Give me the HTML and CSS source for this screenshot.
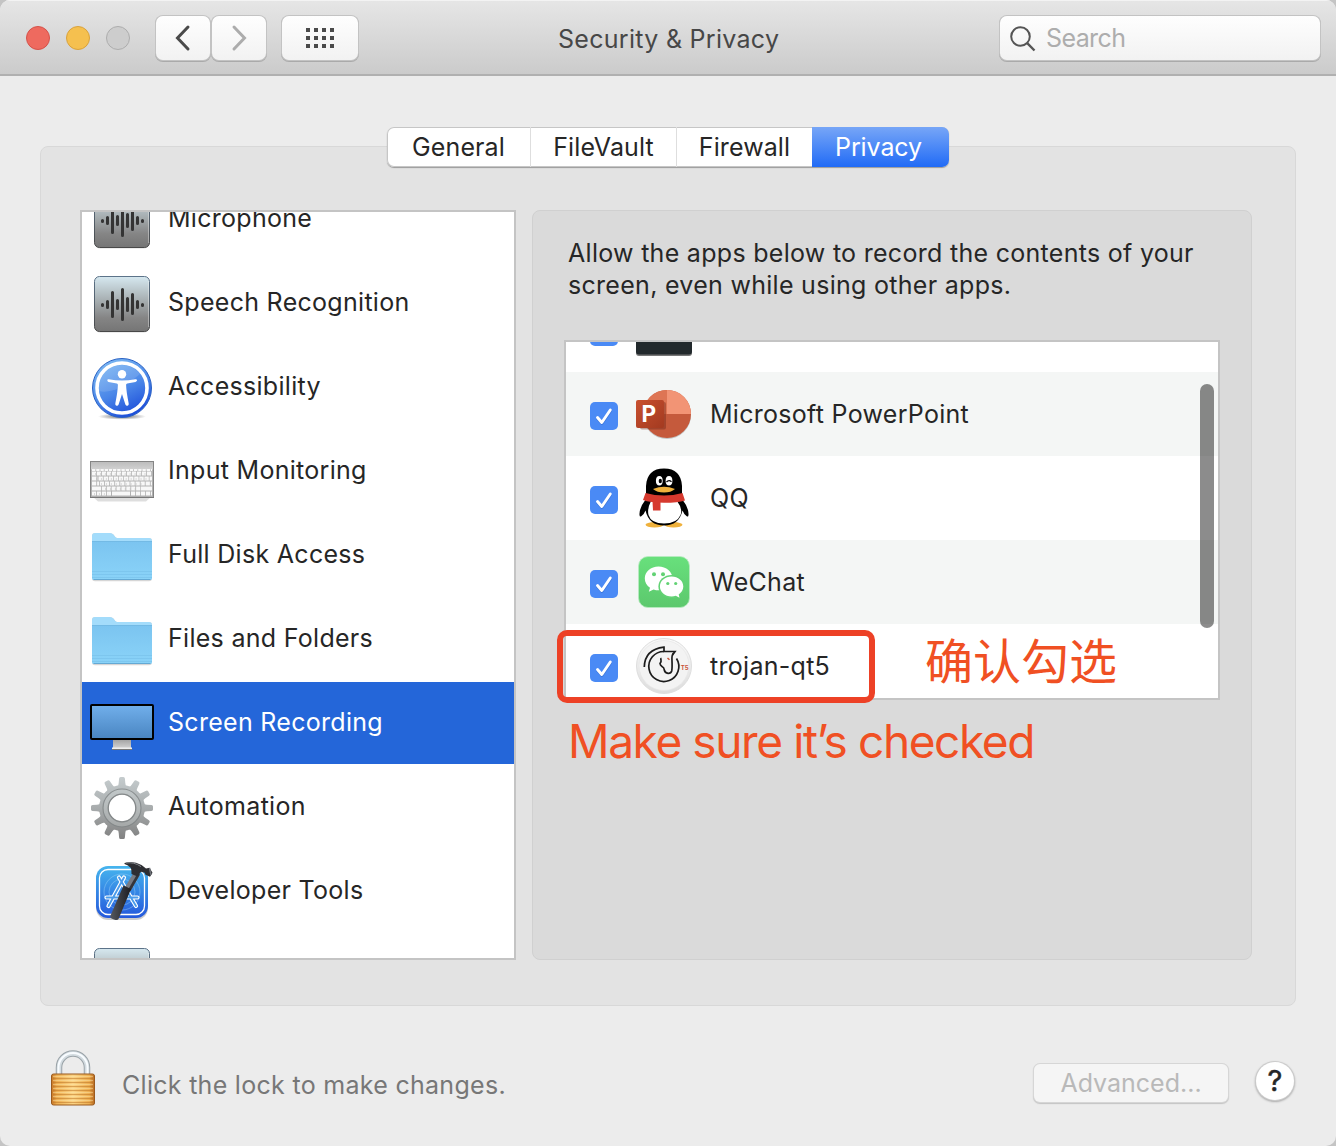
FILE: index.html
```html
<!DOCTYPE html>
<html lang="en">
<head>
<meta charset="utf-8">
<title>Security &amp; Privacy</title>
<link rel="stylesheet" href="styles.css">
</head>
<body>
<svg class="defs" width="0" height="0" aria-hidden="true">
  <defs>
    <linearGradient id="wave-bg" x1="0" y1="0" x2="0" y2="1"><stop offset="0" stop-color="#d6e8f0"/><stop offset=".3" stop-color="#b5c0c4"/><stop offset=".75" stop-color="#858585"/><stop offset="1" stop-color="#757575"/></linearGradient>
    <linearGradient id="wave-edge" x1="0" y1="0" x2="0" y2="1"><stop offset="0" stop-color="#5c7389"/><stop offset="1" stop-color="#484848"/></linearGradient>
    <linearGradient id="folder-bg" x1="0" y1="0" x2="0" y2="1"><stop offset="0" stop-color="#7bc4f0"/><stop offset="1" stop-color="#8ad3f8"/></linearGradient>
    <symbol id="wave" viewBox="0 0 64 64">
      <rect x="4.5" y="5" width="55" height="55.500" rx="5" fill="#000" opacity=".15"/>
      <rect x="4.500" y="4.500" width="55" height="55" rx="5" fill="url(#wave-bg)" stroke="url(#wave-edge)"/>
      <path d="M58.500 9v46" stroke="#fff" opacity=".35"/>
      <g stroke="#343434" stroke-width="3" stroke-linecap="round"><path d="M12.500 32.600v.8M17.500 29.500v6M22.500 20.500v24M27.500 28.500v8M32.500 17.500v30M37.500 26.500v12M42.500 22.500v19M47.500 29.500v6M52.500 32.600v.8"/></g>
    </symbol>
    <symbol id="folder" viewBox="0 0 64 64">
      <path d="M2 48V12q0-3 3-3h15q2 0 3.400 1.600l1.900 2.400q.8.900 2.200.900H59q3 0 3 3V54q0 3.300-3 3.300H5q-3 0-3-3.300z" fill="#000" opacity=".16"/>
      <path d="M2 40V12q0-3 3-3h15q2 0 3.400 1.600l1.900 2.400q.8 1 2.200 1H59q3 0 3 3v37q0 2-2.500 2H4.500Q2 56 2 54z" fill="#a3dcfb"/>
      <path d="M2 17h60v36.500q0 2.500-2.500 2.500h-55Q2 56 2 53.500z" fill="url(#folder-bg)"/>
      <path d="M2 17.500h60" stroke="#6fb5de" opacity=".6"/>
      <path d="M2 47.500h60M2 50.500h60M2 53.500h60" stroke="#74bde8" opacity=".5"/>
      <path d="M3.500 55.500h57" stroke="#64a9d4"/>
    </symbol>
    <symbol id="check" viewBox="0 0 28 28">
      <path d="M7.500 16.500l4.500 5L20.500 9" fill="none" stroke="#1a4db0" stroke-opacity=".35" stroke-width="2.800" stroke-linecap="round" stroke-linejoin="round"/>
      <path d="M7.500 15.500l4.300 5L20.300 8" fill="none" stroke="#fff" stroke-width="2.900" stroke-linecap="round" stroke-linejoin="round"/>
    </symbol>
  </defs>
</svg>

<div class="window">
  <header class="titlebar">
    <div class="lights"><span class="light close"></span><span class="light minimize"></span><span class="light zoom"></span></div>
    <div class="nav">
      <button class="tool"><svg width="20" height="28" viewBox="0 0 20 28"><path d="M15 3L4.500 14 15 25" fill="none" stroke="#4a4a4a" stroke-width="3" stroke-linecap="round"/></svg></button>
      <button class="tool"><svg width="20" height="28" viewBox="0 0 20 28"><path d="M5 3L15.500 14 5 25" fill="none" stroke="#acacac" stroke-width="3" stroke-linecap="round"/></svg></button>
    </div>
    <button class="tool grid"><svg width="28" height="20" viewBox="0 0 28 20" fill="#4a4a4a"><path d="M0 0h4v4H0zM8 0h4v4H8zM16 0h4v4h-4zM24 0h4v4h-4zM0 8h4v4H0zM8 8h4v4H8zM16 8h4v4h-4zM24 8h4v4h-4zM0 16h4v4H0zM8 16h4v4H8zM16 16h4v4h-4zM24 16h4v4h-4z"/></svg></button>
    <h1 class="title">Security &amp; Privacy</h1>
    <div class="search">
      <svg width="26" height="26" viewBox="0 0 26 26" fill="none" stroke="#555" stroke-width="2"><circle cx="10.500" cy="10.500" r="9.300"/><path d="M17.200 17.200l7.300 7.300" stroke-width="2.400"/></svg>
      <span>Search</span>
    </div>
  </header>

  <main class="panel">
    <nav class="tabs">
      <span class="tab t-general">General</span><span class="tab t-vault">FileVault</span><span class="tab t-fire">Firewall</span><span class="tab t-privacy">Privacy</span>
    </nav>
    <div class="columns">
      <ul class="services">
        <li><svg class="icon"><use href="#wave"/></svg><span>Microphone</span></li>
        <li><svg class="icon"><use href="#wave"/></svg><span>Speech Recognition</span></li>
        <li>
          <svg class="icon" viewBox="0 0 64 64">
            <defs><linearGradient id="acc" x1=".2" y1="0" x2=".7" y2="1"><stop offset="0" stop-color="#7cbaf3"/><stop offset=".55" stop-color="#4a86e8"/><stop offset="1" stop-color="#1848d8"/></linearGradient>
            <radialGradient id="acc-shade"><stop offset="0" stop-color="#000" stop-opacity=".6"/><stop offset="1" stop-color="#000" stop-opacity="0"/></radialGradient></defs>
            <ellipse cx="32" cy="60.500" rx="24" ry="3.200" fill="url(#acc-shade)"/>
            <circle cx="32" cy="32" r="29.500" fill="url(#acc)" stroke="#2b62c4"/>
            <circle cx="32" cy="32" r="25" fill="none" stroke="#fff" stroke-width="3.600"/>
            <path d="M9 35Q25 39 50 18A23 23 0 0 0 9 35z" fill="#fff" opacity=".13"/>
            <circle cx="32" cy="18.300" r="4.200" fill="#fff"/>
            <path d="M17.500 23.600q-.8 1.800 1 2.300l8.300 1.600q1.200.300 1.100 1.600-.1 6-2.600 18.400-.3 2 1.200 2.300 1.500.300 2.100-1.400L32 38l3.400 10.400q.6 1.700 2.100 1.400 1.500-.3 1.200-2.300-2.500-12.400-2.600-18.400-.1-1.300 1.100-1.600l8.300-1.600q1.800-.5 1.600-1.800-.3-1.100-1.800-.9Q32 25.800 18.700 23.200q-.8-.1-1.200.4z" fill="#fff"/>
          </svg><span>Accessibility</span></li>
        <li>
          <svg class="icon" viewBox="0 0 64 64">
            <defs><linearGradient id="kb" x1="0" y1="0" x2="0" y2="1"><stop offset="0" stop-color="#bcbcbc"/><stop offset=".2" stop-color="#cfcfcf"/><stop offset=".25" stop-color="#b5b5b5"/><stop offset="1" stop-color="#b0b0b0"/></linearGradient></defs>
            <path d="M3 57h58l-5 4.500H8z" fill="#000" opacity=".13"/>
            <rect x=".5" y="21.500" width="63" height="36" fill="url(#kb)" stroke="#858585"/>
            <path d="M0 57.500h64" stroke="#777"/>
            <g stroke="#f8f8f8" fill="none">
              <path d="M2 30h60" stroke-width="2" stroke-dasharray="3.400 .8"/>
              <path d="M2 33.600h60" stroke-width="4" stroke-dasharray="4.200 .8"/>
              <path d="M2 38.600h5.500m1 0h53.500" stroke-width="4" stroke-dasharray="4.400 .7"/>
              <path d="M2 43.500h7m.8 0h45m.8 0h6.400" stroke-width="4" stroke-dasharray="4.300 .8"/>
              <path d="M2 48.500h9M50.800 48.500h11.200" stroke-width="4"/><path d="M11.800 48.500h38.500" stroke-width="4" stroke-dasharray="4.100 .8"/>
              <path d="M2 53.500h19" stroke-width="4" stroke-dasharray="4.200 .8"/><path d="M22 53.500h18" stroke-width="4"/><path d="M41 53.500h21" stroke-width="4" stroke-dasharray="4.200 .8"/>
            </g>
            <path d="M5 34h54M6 39h52M11 44h44M15 49h34M4 54h15" stroke="#bbb" stroke-width="1" stroke-dasharray="1 3.950" fill="none"/>
          </svg><span>Input Monitoring</span></li>
        <li><svg class="icon"><use href="#folder"/></svg><span>Full Disk Access</span></li>
        <li><svg class="icon"><use href="#folder"/></svg><span>Files and Folders</span></li>
        <li class="selected">
          <svg class="icon" viewBox="0 0 64 64">
            <defs><linearGradient id="scr" x1="0" y1="0" x2="0" y2="1"><stop offset="0" stop-color="#70aeea"/><stop offset="1" stop-color="#4a86c2"/></linearGradient><linearGradient id="stand" x1="0" y1="0" x2="0" y2="1"><stop offset="0" stop-color="#a5a5a5"/><stop offset="1" stop-color="#d0d0d0"/></linearGradient></defs>
            <path d="M23 48h18v8H23z" fill="url(#stand)"/><path d="M22 55.500h20v2H22z" fill="#eee"/><path d="M22 57.500h20" stroke="#777"/>
            <rect x="0" y="12" width="64" height="36" rx="2" fill="#000"/><rect x="2" y="14" width="60" height="32" fill="url(#scr)"/>
          </svg><span>Screen Recording</span></li>
        <li>
          <svg class="icon" viewBox="0 0 64 64">
            <defs><linearGradient id="gear" gradientUnits="userSpaceOnUse" x1="0" y1="0" x2="0" y2="64"><stop offset="0" stop-color="#c6cdcf"/><stop offset=".5" stop-color="#a8acad"/><stop offset="1" stop-color="#808080"/></linearGradient>
            <mask id="gear-mask"><circle cx="32" cy="32" r="23" fill="#fff"/>
              <g fill="#fff">
                <path id="teeth" d="M27 11q1.600-1 1.700-4l.4-4.500q.1-1.500 1.500-1.500h2.800q1.400 0 1.500 1.500l.4 4.500q.1 3 1.700 4zM27 53q1.600 1 1.700 4l.4 4.500q.1 1.500 1.500 1.500h2.800q1.400 0 1.500-1.500l.4-4.500q.1-3 1.700-4z"/>
                <use href="#teeth" transform="rotate(30 32 32)"/><use href="#teeth" transform="rotate(60 32 32)"/><use href="#teeth" transform="rotate(90 32 32)"/><use href="#teeth" transform="rotate(120 32 32)"/><use href="#teeth" transform="rotate(150 32 32)"/>
              </g><circle cx="32" cy="32" r="13.500" fill="#000"/></mask></defs>
            <g mask="url(#gear-mask)"><rect width="64" height="64" fill="url(#gear)"/></g>
            <circle cx="32" cy="32" r="16.500" fill="none" stroke="#d5dadb" stroke-opacity=".3" stroke-width="4.500"/>
            <circle cx="32" cy="32" r="19" fill="none" stroke="#7e8384" stroke-opacity=".8" stroke-width="1.100"/>
            <circle cx="32" cy="32" r="13.800" fill="none" stroke="#85898a" stroke-width="1.300"/>
          </svg><span>Automation</span></li>
        <li>
          <svg class="icon" viewBox="0 0 64 64">
            <defs><linearGradient id="xc" x1="0" y1="0" x2="0" y2="1"><stop offset="0" stop-color="#46b5ee"/><stop offset="1" stop-color="#2458dc"/></linearGradient><linearGradient id="handle" x1="0" y1="0" x2="1" y2="0"><stop offset="0" stop-color="#55585f"/><stop offset="1" stop-color="#1c1c20"/></linearGradient></defs>
            <rect x="6" y="8" width="52" height="52" rx="12" fill="#000" opacity=".2"/>
            <rect x="6" y="6" width="52" height="52" rx="12" fill="url(#xc)"/>
            <rect x="9.500" y="9.500" width="45" height="45" rx="8.500" fill="none" stroke="#fff" stroke-width="1.300"/>
            <circle cx="32" cy="32" r="18" fill="none" stroke="#a8dafb" stroke-opacity=".4"/><circle cx="32" cy="32" r="13" fill="none" stroke="#a8dafb" stroke-opacity=".4"/>
            <g fill="none" stroke="#fff" stroke-width="4.200" stroke-linecap="round"><path d="M16.500 37.500h31M34 17.500L18.500 46M29 17.500L46 46"/></g>
            <g fill="none" stroke="#4a9bea" stroke-width="1.900" stroke-linecap="round"><path d="M16.500 37.500h31M34 17.500L18.500 46M29 17.500L46 46"/></g>
            <path d="M44 12l6 2.500L40.500 31l-6-3z" fill="#777b83"/><path d="M47.500 13.500l2.500 1L40.500 31l-2.500-1.200z" fill="#34363b"/>
            <path d="M33.500 25.500l7.500 3.500L28.500 59q-1 1.800-4.500.5-4.500-1.500-3.700-3.500z" fill="url(#handle)"/>
            <path d="M34.500 3Q43 .5 51.500 5l4.500 3.500 3.500-.8 3 5-2.500 4-4.500-2-.8-2-3.700-1-3.500 4.800-6-2.500q1-8-7-10z" fill="#2d2e32"/>
            <path d="M36 3q8-1.300 15 3.600" stroke="#85888d" fill="none"/><path d="M59.500 8l1.500 7" stroke="#707379" stroke-width="1.500"/>
          </svg><span>Developer Tools</span></li>
        <li><svg class="icon"><use href="#wave"/></svg></li>
      </ul>

      <section class="detail">
        <p class="intro">Allow the apps below to record the contents of your<br>screen, even while using other apps.</p>
        <div class="apps-wrap">
          <ul class="apps">
            <li><span class="box"><svg><use href="#check"/></svg></span><svg class="icon" viewBox="0 0 64 64"><rect x="4" y="1" width="56" height="57" rx="3" fill="#777"/><rect x="4" y="0" width="56" height="56.500" rx="3" fill="#22292c"/></svg></li>
            <li><span class="box"><svg><use href="#check"/></svg></span>
              <svg class="icon" viewBox="0 0 64 64">
                <defs><linearGradient id="pp" x1="0" y1="0" x2="1" y2="1"><stop offset="0" stop-color="#c8502f"/><stop offset="1" stop-color="#a33a20"/></linearGradient></defs>
                <circle cx="35" cy="33" r="24" fill="#000" opacity=".2"/>
                <circle cx="35" cy="32" r="24" fill="#c55a3c"/><path d="M35 32V8a24 24 0 0 0-24 24z" fill="#de7554"/><path d="M35 32V8a24 24 0 0 1 24 24z" fill="#f29475"/>
                <rect x="8" y="20" width="26" height="27.500" rx="2" fill="#6d2415" opacity=".4"/>
                <rect x="4" y="18" width="28" height="28" rx="2" fill="url(#pp)"/>
                <text x="9.500" y="39.700" class="pp-letter">P</text>
              </svg><span>Microsoft PowerPoint</span></li>
            <li><span class="box"><svg><use href="#check"/></svg></span>
              <svg class="icon" viewBox="0 0 64 64">
                <ellipse cx="22.500" cy="58.800" rx="9" ry="2.700" fill="#efb13c"/><ellipse cx="41.500" cy="58.800" rx="9" ry="2.700" fill="#efb13c"/>
                <path d="M14 33Q7 42 7.500 49q.3 2.500 2 1 2.500-1.500 4-5.500Q17 59.500 32 59.500t18.500-15q1.500 4 4 5.500 1.700 1.500 2-1Q57 42 50 33z" fill="#000"/>
                <path d="M19 35h26q6 8 3.500 14Q45 57.500 32 57.500T16.500 49Q15 43 19 35z" fill="#fff"/>
                <path d="M14 28V20Q15 2.500 32 2.500T50 20v9q0 3-18 4-18-1-18-5z" fill="#000"/>
                <path d="M13.500 27Q32 32 50.500 27l2.500 7.500Q46 36.800 32 36.800T11 34z" fill="#d6392e"/><path d="M20.500 35h8v9.500h-7.500z" fill="#d6392e"/>
                <ellipse cx="27.300" cy="14.800" rx="3.400" ry="4.700" fill="#fff"/><ellipse cx="37" cy="14.800" rx="3.400" ry="4.700" fill="#fff"/>
                <ellipse cx="28.300" cy="15" rx="1.600" ry="2.200" fill="#000"/><path d="M34.500 16q2.300-2.500 5-.3" stroke="#000" stroke-width="1.300" fill="none"/>
                <path d="M21 23q11-4.500 22 0-4 3.500-11 3.500T21 23z" fill="#efb13c"/>
              </svg><span>QQ</span></li>
            <li><span class="box"><svg><use href="#check"/></svg></span>
              <svg class="icon" viewBox="0 0 64 64">
                <defs><linearGradient id="wc" x1="0" y1="0" x2="0" y2="1"><stop offset="0" stop-color="#68e07c"/><stop offset="1" stop-color="#5cc86d"/></linearGradient></defs>
                <rect x="6.500" y="6.500" width="51" height="51" rx="9.500" fill="url(#wc)" stroke="#b8ebc0" stroke-width=".8"/>
                <path d="M26.500 16.500c-7.700 0-13.700 5.200-13.700 12 0 3.700 2 7 5.200 9.300l-1.200 4 4.800-2.400c1.500.6 3.300.900 5 .900 8 0 14-5.300 14-11.800S34.200 16.500 26.500 16.500z" fill="#fff"/>
                <ellipse cx="39.600" cy="36.500" rx="13.200" ry="11.600" fill="#62d274"/>
                <path d="M39.600 26.600c-6.600 0-11.700 4.400-11.700 9.900s5.100 9.900 11.700 9.900c1.500 0 3-.200 4.200-.7l3.700 2-.8-3.300c2.800-1.800 4.600-4.700 4.600-7.900 0-5.500-5.100-9.900-11.700-9.900z" fill="#fff"/>
                <circle cx="22" cy="24.300" r="2" fill="#62d274"/><circle cx="31" cy="24.300" r="2" fill="#62d274"/><circle cx="35.800" cy="33.500" r="1.600" fill="#62d274"/><circle cx="43.700" cy="33.500" r="1.600" fill="#62d274"/>
              </svg><span>WeChat</span></li>
            <li><span class="box"><svg><use href="#check"/></svg></span>
              <svg class="icon" viewBox="0 0 64 64">
                <defs><linearGradient id="tj" x1="0" y1="0" x2="0" y2="1"><stop offset="0" stop-color="#fafafa"/><stop offset="1" stop-color="#ddd"/></linearGradient></defs>
                <circle cx="32" cy="32" r="27.500" fill="url(#tj)" stroke="#dedede"/><circle cx="32" cy="31.500" r="25" fill="#f3f3f3" stroke="#e6e6e6" stroke-width=".7"/>
                <g fill="none" stroke="#1c1c1c" stroke-width="1.700">
                  <path d="M12.300 33Q12.800 15.500 32 13.200v4.300h11l-2.500 3.500"/>
                  <path d="M44.500 24.500A15 15 0 1 1 32 17.500"/>
                  <path d="M41.500 19q-2 2-1.500 8 .3 7-.3 10-.7 2.500-3.700 2.300-3.200-.3-3.700-3.300-.1-2.500-2.300-3.500-1.800-1.200-2-3 1.500-2 1-3.500-.5-1.500.5-1.800"/>
                </g><path d="M35.500 24l2 1.800" stroke="#c8553a" stroke-width="1.500"/><text x="48.700" y="36" class="t5">T5</text>
              </svg><span>trojan-qt5</span></li>
          </ul>
          <div class="scrollbar"></div>
          <div class="marker"></div>
          <div class="note-zh" lang="zh">确认勾选</div>
        </div>
        <p class="note-en">Make sure it’s checked</p>
      </section>
    </div>
  </main>

  <footer class="footer">
    <svg class="lock" width="46" height="58" viewBox="0 0 46 58">
      <defs><linearGradient id="brass" x1="0" y1="0" x2="1" y2="0"><stop offset="0" stop-color="#c77726"/><stop offset=".12" stop-color="#edae50"/><stop offset=".5" stop-color="#fbd384"/><stop offset=".88" stop-color="#edae50"/><stop offset="1" stop-color="#b76820"/></linearGradient></defs>
      <g fill="none"><path d="M9 27V17.500a14 14 0 0 1 28 0V27" stroke="#9aa3a8" stroke-width="6.500"/><path d="M9 27V17.500a14 14 0 0 1 28 0V27" stroke="#d3dbe0" stroke-width="4.500"/><path d="M8.500 27V17.500a14.500 14.500 0 0 1 29 0V27" stroke="#f8fcff" stroke-width="2"/></g>
      <rect x="1.500" y="24" width="43" height="31" rx="2" fill="url(#brass)" stroke="#9a5a1e"/>
      <path d="M3 28.500h40M3 32.500h40M3 36.500h40M3 40.500h40M3 44.500h40M3 48.500h40M3 52.500h40" stroke="#b96f24" stroke-opacity=".5"/><path d="M3 26.500h40M3 30.500h40M3 34.500h40M3 38.500h40M3 42.500h40M3 46.500h40M3 50.500h40" stroke="#fff0bb" stroke-opacity=".4"/>
    </svg>
    <span class="hint">Click the lock to make changes.</span>
    <button class="advanced">Advanced...</button>
    <button class="help">?</button>
  </footer>
</div>
</body>
</html>
```
FILE: styles.css
```css
* { box-sizing: border-box; margin: 0; padding: 0; }
body { width: 1336px; height: 1146px; overflow: hidden; background: #c4c4c4; font-family: Inter, "Noto Sans CJK SC", sans-serif; font-size: 25px; letter-spacing: 0.29px; color: #262626; }
ul { list-style: none; }
button { font: inherit; letter-spacing: inherit; color: inherit; border: 0; }
.defs { display: block; position: absolute; }
.window { display: flex; flex-direction: column; height: 1146px; background: #ececec; border-radius: 10px; overflow: hidden; }

.titlebar { display: flex; align-items: center; flex: none; height: 76px; padding: 2px 16px 0 26px; background: linear-gradient(#e6e6e6, #cbcbcb); border-bottom: 2px solid #b0b0b0; box-shadow: inset 0 1px #f3f3f3; }
.lights { display: flex; gap: 16px; }
.light { width: 24px; height: 24px; border-radius: 50%; border: 1px solid; }
.close { background: #ee6a5f; border-color: #d5524a; }
.minimize { background: #f5c04f; border-color: #d9a23c; }
.zoom { background: #cdcdcd; border-color: #adadad; }
.nav { display: flex; gap: 2px; margin-left: 26px; }
.tool { display: flex; align-items: center; justify-content: center; width: 54px; height: 44px; border-radius: 7px; background: linear-gradient(#fefefe, #f2f2f2); box-shadow: 0 0 0 1px #c3c3c3, 0 1px 0 1px #aaa; }
.grid { width: 76px; margin-left: 16px; }
.title { margin: 2px 0 0 200px; width: 240px; font-size: 25px; font-weight: 400; color: #474747; white-space: nowrap; }
.search { display: flex; align-items: center; gap: 10px; margin-left: auto; width: 320px; height: 44px; padding-left: 10px; border-radius: 7px; background: linear-gradient(#fefefe, #f2f2f2); box-shadow: 0 0 0 1px #c3c3c3, 0 1px 0 1px #aaa; color: #adadad; letter-spacing: -0.6px; }
.search svg { margin-top: 2px; }

.panel { flex: none; height: 860px; margin: 70px 40px 0; border: 1px solid #d8d8d8; border-radius: 8px; background: #e3e3e3; }
.tabs { display: flex; width: 562px; height: 40px; margin: -20px auto 0; border-radius: 7px; background: #fff; box-shadow: inset 0 0 0 1px #c6c6c6, 0 1px 1px #999; overflow: hidden; }
.tab { display: flex; align-items: center; justify-content: center; border-left: 1px solid #dedede; letter-spacing: 0.1px; }
.t-general { width: 143px; border-left: 0; }
.t-vault { width: 146px; }
.t-fire { width: 136px; }
.t-privacy { width: 137px; padding-right: 4px; border: 0; letter-spacing: -0.1px; color: #fff; background: linear-gradient(#77a6f7, #216bf6); }

.columns { display: flex; gap: 16px; padding: 43px 43px 0 39px; }
.services { width: 436px; height: 750px; border: 2px solid #c4c4c4; background: #fff; overflow: hidden; }
.services li { display: flex; align-items: center; height: 82px; margin-bottom: 2px; padding-left: 8px; gap: 14px; }
.services li:first-child { margin-top: -34px; }
.services .icon { margin-top: 2px; }
.services span { margin-top: -2px; }
.icon { width: 64px; height: 64px; flex: none; }
.services .selected { background: #2466d9; color: #fff; }

.detail { width: 720px; height: 750px; border: 1px solid #d0d0d0; border-radius: 8px; background: #dadada; padding: 26px 31px 0; }
.intro { padding-left: 4px; line-height: 32px; white-space: nowrap; }
.apps-wrap { position: relative; margin-top: 39px; width: 656px; }
.apps { height: 360px; border: 2px solid #c4c4c4; background: #fff; overflow: hidden; }
.apps li { display: flex; align-items: center; height: 84px; padding-left: 24px; }
.apps li:first-child { margin-top: -54px; }
.apps li:nth-child(even) { background: #f4f6f5; }
.box { width: 28px; height: 28px; margin: 4px 14px 0 0; border-radius: 5px; background: #4a8af5; }
.box svg { display: block; width: 28px; height: 28px; }
.apps .icon { margin-right: 14px; }
.pp-letter { font: 700 22.5px Inter, sans-serif; fill: #fff; }
.t5 { font: 700 6px Inter, sans-serif; fill: #c8553a; letter-spacing: 0; }
.scrollbar { position: absolute; left: 636px; top: 44px; width: 14px; height: 244px; border-radius: 7px; background: rgba(0, 0, 0, 0.45); }
.marker { position: absolute; left: -7px; top: 290px; width: 318px; height: 73px; border: 6px solid #ed4126; border-radius: 10px; }
.note-zh { position: absolute; left: 361px; top: 283px; font-family: "Noto Sans CJK SC", sans-serif; font-size: 48px; line-height: 70px; letter-spacing: 0; color: #f05023; white-space: nowrap; }
.note-en { margin-top: 13px; padding-left: 4px; font-size: 46px; line-height: 56px; letter-spacing: -1.4px; color: #f05023; white-space: nowrap; }

.footer { display: flex; align-items: center; height: 80px; margin-top: 35px; padding: 2px 42px 0 50px; }
.hint { margin-left: 26px; margin-top: 6px; color: #777; }
.lock { margin-top: -7px; }
.advanced { width: 194px; height: 38px; margin-left: auto; margin-top: 2px; border-radius: 6px; background: #f5f5f5; color: #b9b9b9; box-shadow: 0 0 0 1px #d6d6d6, 0 1px 1px 1px #c4c4c4; letter-spacing: 0; }
.help { width: 38px; height: 38px; margin-left: 28px; margin-top: -2px; border-radius: 50%; background: #fff; box-shadow: 0 0 0 1px #ccc, 0 1px 2px 1px #aaa; font-size: 29px; font-weight: 400; line-height: 38px; letter-spacing: 0; -webkit-text-stroke: 0.5px #262626; }
```
